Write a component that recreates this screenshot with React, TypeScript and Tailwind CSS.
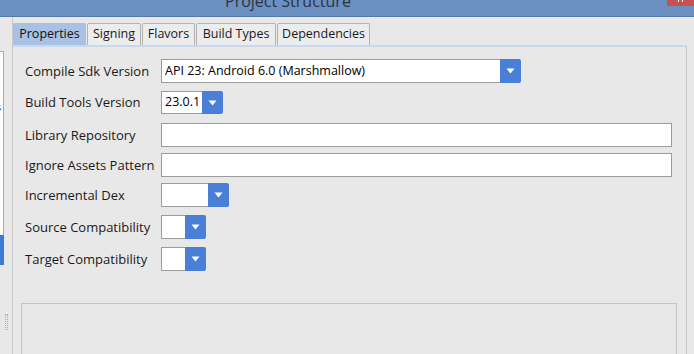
import React from 'react';

const font = { fontFamily: '"Open Sans", "Noto Sans", "Liberation Sans", sans-serif' };

const Arrow = () => (
  <svg width="9" height="6" viewBox="0 0 9 6" className="block">
    <path d="M0.5 0.5 L8.5 0.5 L4.5 5.5 Z" fill="#ffffff" />
  </svg>
);

const Combo = ({ value, width, height = 'h-[24px]' }: { value?: string; width: string; height?: string }) => (
  <div className={`flex ${width} ${height}`}>
    <div className="flex-1 bg-white border border-r-0 border-[#9c9c9c] flex items-center pl-[3px] text-[12.5px] text-black leading-none">
      {value}
    </div>
    <div className="w-[21px] bg-[#4a7fd7] rounded-r-[2px] flex items-center justify-center">
      <Arrow />
    </div>
  </div>
);

const Field = () => <div className="w-[511px] h-[24px] bg-white border border-[#9c9c9c]" />;

const Row = ({ label, top, children }: { label: string; top: string; children: React.ReactNode }) => (
  <div className={`flex items-center ${top}`}>
    <div className="w-[136px] text-[13px] text-[#1a1a1a] leading-none">{label}</div>
    {children}
  </div>
);

const tabs = [
  { t: 'Properties', w: 'w-[73px]' },
  { t: 'Signing', w: 'w-[54px]' },
  { t: 'Flavors', w: 'w-[53px]' },
  { t: 'Build Types', w: 'w-[80px]' },
  { t: 'Dependencies', w: 'w-[93px]' },
];

export default function App() {
  return (
    <div className="w-[694px] h-[354px] bg-[#e8e8e8] overflow-hidden flex flex-col relative" style={font}>
      {/* title bar */}
      <div className="h-[17px] bg-[#6a8fc0] border-b border-[#5679ad] relative overflow-hidden">
        <div className="absolute left-[225px] top-[-7px] text-[16px] text-[#2e3440] leading-none whitespace-nowrap">
          Project Structure
        </div>
        <div className="absolute right-0 top-0 w-[27px] h-[6px] bg-[#c75050]">
          <div className="absolute left-[11px] top-0 w-[1px] h-[2px] bg-white" />
          <div className="absolute left-[15px] top-0 w-[1px] h-[2px] bg-white" />
        </div>
      </div>

      <div className="flex flex-1">
        {/* left strip */}
        <div className="w-[13px] border-r border-[#c8c8c8] relative">
          <div className="absolute left-0 top-[34px] w-[4px] h-[184px] bg-white border-r border-t border-[#a8a8a8]" />
          <div className="absolute left-0 top-[84px] text-[11px] text-[#444] leading-none" style={{ marginLeft: '-4px' }}>s</div>
          <div className="absolute left-0 top-[218px] w-[4px] h-[30px] bg-[#3d7ad6]" />
          <div className="absolute left-[5px] top-[297px] w-[3px] h-[16px] border-l border-r border-dotted border-[#aaa]" />
        </div>

        {/* main */}
        <div className="flex flex-col w-[674px] pt-[6px]">
          <div className="flex h-[22px] items-end">
            {tabs.map((tab, i) => (
              <div
                key={tab.t}
                className={`${tab.w} h-[22px] flex items-center justify-center text-[12.5px] leading-none rounded-t-[2px] border border-b-0 mr-[1px] ${
                  i === 0 ? 'bg-[#a9c1e4] border-[#a9c1e4] text-[#111]' : 'bg-[#ececec] border-[#b4b4b4] text-[#1a1a1a]'
                }`}
              >
                {tab.t}
              </div>
            ))}
          </div>
          <div className="flex-1 border-t-[2px] border-t-[#c8d9ef] border-r border-[#c8c8c8] pl-[12px] flex flex-col">
            <Row label="Compile Sdk Version" top="mt-[12px]">
              <Combo value="API 23: Android 6.0 (Marshmallow)" width="w-[360px]" />
            </Row>
            <Row label="Build Tools Version" top="mt-[8px]">
              <Combo value="23.0.1" width="w-[62px]" height="h-[23px]" />
            </Row>
            <Row label="Library Repository" top="mt-[9px]">
              <Field />
            </Row>
            <Row label="Ignore Assets Pattern" top="mt-[6px]">
              <Field />
            </Row>
            <Row label="Incremental Dex" top="mt-[6px]">
              <Combo width="w-[68px]" />
            </Row>
            <Row label="Source Compatibility" top="mt-[8px]">
              <Combo width="w-[45px]" />
            </Row>
            <Row label="Target Compatibility" top="mt-[8px]">
              <Combo width="w-[45px]" />
            </Row>
            <div className="ml-[-4px] mt-[32px] w-[656px] flex-1 border border-b-0 border-[#c4c4c4]" />
          </div>
        </div>
      </div>
    </div>
  );
}
